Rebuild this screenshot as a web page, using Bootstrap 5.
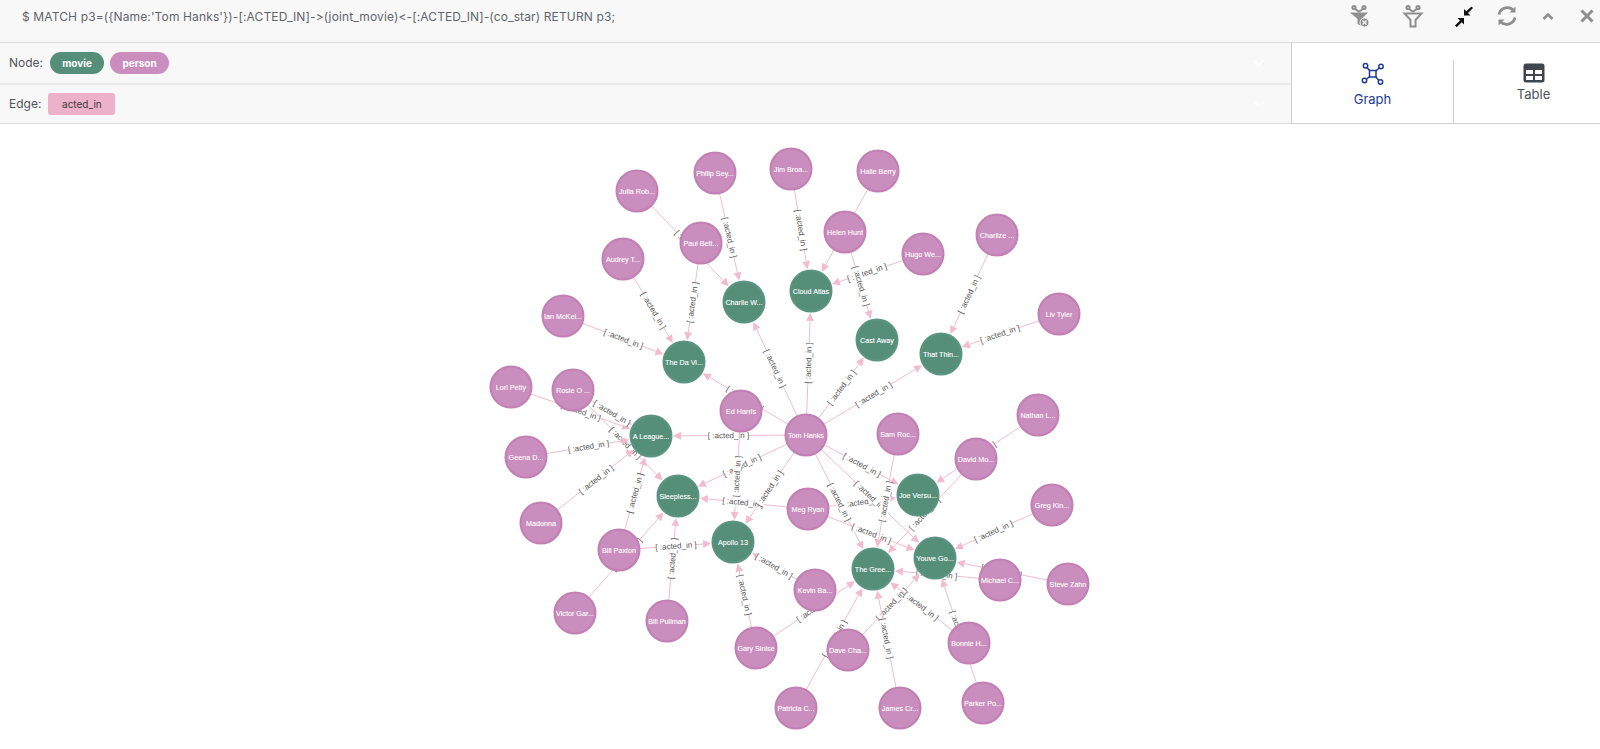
<!DOCTYPE html>
<html lang="en">

<head>
    <meta charset="UTF-8">
    <title>Graph Result</title>
    <link href="https://cdn.jsdelivr.net/npm/bootstrap@5.3.3/dist/css/bootstrap.min.css" rel="stylesheet">
    <style>
        html, body {
            height: 100%;
            overflow: hidden;
        }

        body {
            font-family: Inter, "Open Sans", sans-serif;
            background: #fff;
        }

        .query-bar {
            height: 43px;
            background: #f8f8f8;
            border-bottom: 1px solid #d9d9d9;
            padding-left: 22px;
            color: #5f666d;
            font-size: 12px;
        }

        .query-bar .query-text {
            margin-top: 8px;
            letter-spacing: .13px;
        }

        .tool-group {
            height: 32px;
        }

        .tool-btn {
            width: 26px;
            height: 26px;
            margin-top: 3px;
        }

        .tool-btn:nth-child(2) { margin-left: 28px; }
        .tool-btn:nth-child(3) { margin-left: 24px; }
        .tool-btn:nth-child(4) { margin-left: 18px; }
        .tool-btn:nth-child(5) { margin-left: 15px; }
        .tool-btn:nth-child(6) { margin-left: 13px; }

        .legend-panel {
            height: 81px;
        }

        .legend-rows {
            flex: 1 1 auto;
            background: #f8f8f8;
            border-bottom: 1px solid #d9d9d9;
        }

        .legend-row {
            height: 40px;
            padding-left: 9px;
            font-size: 12px;
            color: #50565c;
        }

        .legend-row + .legend-row {
            border-top: 2px solid #e8e8e8;
        }

        .legend-row .row-label {
            margin-right: 7px;
        }

        .legend-row .fold {
            margin-left: auto;
            margin-right: 27px;
        }

        .pill-movie, .pill-person, .tag-edge {
            height: 22px;
            display: inline-flex;
            align-items: center;
            justify-content: center;
            font-size: 10px;
        }

        .pill-movie {
            width: 54px;
            margin-right: 6px;
            border-radius: 11px;
            background: #558f7a;
            color: #fff;
            font-weight: 700;
        }

        .pill-person {
            width: 59px;
            border-radius: 11px;
            background: #c98dbe;
            color: #fff;
            font-weight: 700;
        }

        .tag-edge {
            width: 67px;
            border-radius: 3px;
            background: #edb2c9;
            color: #3a3a3a;
        }

        .view-switch {
            width: 309px;
            overflow: hidden;
            border-left: 1px solid #d0d0d0;
            border-bottom: 1px solid #d0d0d0;
            background: #fff;
            font-size: 13px;
        }

        .view-tab {
            flex: 0 0 161px;
            padding-top: 19px;
            color: #4a5057;
        }

        .view-tab.active {
            color: #1f3a93;
        }

        .view-tab + .view-tab {
            position: relative;
            padding-top: 20px;
        }

        .view-tab + .view-tab::before {
            content: "";
            position: absolute;
            left: 0;
            top: 17px;
            bottom: 0;
            border-left: 1px solid #d0d0d0;
        }

        .view-tab .tab-icon {
            display: block;
            margin: 0 auto 4px;
        }

        .view-tab + .view-tab .tab-icon {
            margin-bottom: 2px;
        }

        #graph-canvas {
            display: block;
        }

        #graph-canvas text {
            font-family: "Liberation Sans", Arial, sans-serif;
        }
    </style>
</head>

<body>
    <div class="query-bar d-flex justify-content-between">
        <div class="query-text">$ MATCH p3=({Name:'Tom Hanks'})-[:ACTED_IN]-&gt;(joint_movie)&lt;-[:ACTED_IN]-(co_star) RETURN p3;</div>
        <div class="tool-group d-flex">
            <!-- clear filter -->
            <svg class="tool-btn" viewBox="0 0 26 26" fill="none" stroke="#8f8f8f" stroke-width="2">
                <circle cx="8" cy="4.5" r="1.6"/><circle cx="18" cy="4.5" r="1.6"/>
                <path d="M9 6l4 2.5L17 6"/>
                <path d="M4 9.5h18l-6.5 6.5v7l-4-2v-5z" fill="#8f8f8f" stroke="none"/>
                <circle cx="18.500" cy="19.500" r="4.500" fill="#8f8f8f" stroke="#f8f8f8" stroke-width="1"/>
                <path d="M16.500 17.500l4 4m0-4l-4 4" stroke="#f8f8f8" stroke-width="1.300"/>
            </svg>
            <!-- filter -->
            <svg class="tool-btn" viewBox="0 0 26 26" fill="none" stroke="#8f8f8f" stroke-width="2">
                <circle cx="8" cy="4.500" r="1.600"/><circle cx="18" cy="4.500" r="1.600"/>
                <path d="M9 6l4 2.500L17 6"/>
                <path d="M4.500 10.500h17L15.500 17v6.500h-5V17z"/>
            </svg>
            <!-- compress -->
            <svg class="tool-btn" viewBox="0 0 26 26" fill="#111">
                <path d="M5 22.500l5-5-2.500-2.500H14v6.500l-2.300-2.300-5 5z"/>
                <path d="M21.500 3.500l1.500 1.500-5 5 2.500 2.500H14V6l2.300 2.300z"/>
            </svg>
            <!-- refresh -->
            <svg class="tool-btn" viewBox="0 0 26 26" fill="none" stroke="#8f8f8f" stroke-width="2.800">
                <path d="M5 11.500a8.500 8.500 0 0 1 15-3.500"/>
                <path d="M21 14.500a8.500 8.500 0 0 1-15 3.500"/>
                <path d="M21.500 3.500v6h-6z" fill="#8f8f8f" stroke="none"/>
                <path d="M4.500 22.500v-6h6z" fill="#8f8f8f" stroke="none"/>
            </svg>
            <!-- collapse -->
            <svg class="tool-btn" viewBox="0 0 26 26" fill="none" stroke="#8f8f8f" stroke-width="2.600">
                <path d="M8.500 16l4.500-4.500 4.500 4.500"/>
            </svg>
            <!-- close -->
            <svg class="tool-btn" viewBox="0 0 26 26" fill="none" stroke="#8f8f8f" stroke-width="3">
                <path d="M7.500 7.500l11 11m0-11l-11 11"/>
            </svg>
        </div>
    </div>

    <div class="legend-panel d-flex">
        <div class="legend-rows">
            <div class="legend-row d-flex align-items-center">
                <span class="row-label">Node:</span>
                <span class="pill-movie">movie</span>
                <span class="pill-person">person</span>
                <svg class="fold" width="10" height="7" viewBox="0 0 10 7" fill="none" stroke="#fff" stroke-width="2"><path d="M1 1l4 4 4-4"/></svg>
            </div>
            <div class="legend-row d-flex align-items-center">
                <span class="row-label">Edge:</span>
                <span class="tag-edge">acted_in</span>
                <svg class="fold" width="10" height="7" viewBox="0 0 10 7" fill="none" stroke="#fff" stroke-width="2"><path d="M1 1l4 4 4-4"/></svg>
            </div>
        </div>
        <div class="view-switch d-flex">
            <div class="view-tab active text-center">
                <svg class="tab-icon" width="24" height="24" viewBox="0 0 24 24" fill="none" stroke="#1f3a93" stroke-width="1.500">
                    <rect x="8.500" y="8.500" width="6.500" height="6.500"/>
                    <circle cx="4.500" cy="3.800" r="2.200"/><circle cx="20" cy="4.500" r="2.200"/>
                    <circle cx="3.500" cy="18.500" r="2.200"/><circle cx="19.500" cy="20" r="2.200"/>
                    <path d="M6 5.500l2.800 3.300M18.200 6l-3.400 3M5.500 17l3.300-2.300M17.800 18.200l-3-3.300"/>
                </svg>
                Graph
            </div>
            <div class="view-tab text-center">
                <svg class="tab-icon" width="22" height="20" viewBox="0 0 22 20">
                    <rect x="0.500" y="0.500" width="21" height="19" rx="2.500" fill="#3f464d"/>
                    <path d="M3 7h7v4H3zM12 7h7v4h-7zM3 13h7v4H3zM12 13h7v4h-7z" fill="#fff"/>
                </svg>
                Table
            </div>
        </div>
    </div>

    <svg id="graph-canvas" width="1600" height="625" viewBox="0 124 1600 625"></svg>

    <script>
        const nodes = {
            julia: ['Julia Rob...', 637, 191], philip: ['Philip Sey...', 715, 173], jim: ['Jim Broa...', 791, 169],
            halle: ['Halle Berry', 878, 171], paul: ['Paul Bett...', 701, 243], helen: ['Helen Hunt', 845, 232],
            audrey: ['Audrey T...', 623, 259], hugo: ['Hugo We...', 923, 254], charlize: ['Charlize ...', 997, 235],
            ian: ['Ian McKel...', 563, 316], liv: ['Liv Tyler', 1059, 314], lori: ['Lori Petty', 511, 387],
            rosie: ['Rosie O ...', 573, 390], ed: ['Ed Harris', 741, 411], nathan: ['Nathan L...', 1038, 415],
            tom: ['Tom Hanks', 806, 435], sam: ['Sam Roc...', 898, 434], david: ['David Mo...', 976, 459],
            geena: ['Geena D...', 526, 457], madonna: ['Madonna', 541, 523], meg: ['Meg Ryan', 808, 509],
            greg: ['Greg Kin...', 1052, 505], paxton: ['Bill Paxton', 619, 550], michael: ['Michael C...', 1000, 580],
            steve: ['Steve Zahn', 1068, 584], kevin: ['Kevin Ba...', 815, 590], victor: ['Victor Gar...', 575, 613],
            pullman: ['Bill Pullman', 667, 621], gary: ['Gary Sinise', 756, 648], bonnie: ['Bonnie H...', 969, 643],
            dave: ['Dave Cha...', 848, 650], patricia: ['Patricia C...', 796, 708], james: ['James Cr...', 900, 708],
            parker: ['Parker Po...', 983, 703]
        };

        const movies = {
            charlie: ['Charlie W...', 744, 302], cloud: ['Cloud Atlas', 811, 291], cast: ['Cast Away', 877, 340],
            thing: ['That Thin...', 941, 354], davinci: ['The Da Vi...', 684, 362], league: ['A League...', 651, 436],
            sleepless: ['Sleepless...', 678, 496], apollo: ['Apollo 13', 733, 542], joe: ['Joe Versu...', 918, 495],
            youve: ['Youve Go...', 935, 558], green: ['The Gree...', 873, 569]
        };

        // drawn in this order, later labels cover earlier ones
        const edges = [
            'julia charlie', 'philip charlie', 'tom charlie', 'audrey davinci', 'paul davinci', 'ian davinci', 'tom davinci',
            'jim cloud', 'halle cloud', 'hugo cloud', 'helen cast', 'tom cloud', 'tom cast', 'tom thing',
            'charlize thing', 'liv thing', 'lori league', 'rosie sleepless', 'rosie league', 'geena league', 'madonna league',
            'paxton league', 'tom league', 'victor sleepless', 'pullman sleepless', 'paxton apollo', 'tom sleepless',
            'ed apollo', 'meg sleepless', 'tom apollo', 'kevin apollo', 'gary apollo', 'meg joe', 'tom joe', 'tom youve',
            'tom green', 'meg youve', 'sam green', 'nathan joe', 'david green', 'greg youve', 'steve youve',
            'michael green', 'gary green', 'patricia green', 'dave youve', 'james green', 'bonnie green', 'parker youve'
        ];

        const svgNs = 'http://www.w3.org/2000/svg';
        const canvas = document.getElementById('graph-canvas');
        const nodeRadius = 20;
        const edgeColor = '#f1bccf';

        function add(tag, attrs, text) {
            const el = document.createElementNS(svgNs, tag);
            Object.keys(attrs).forEach(k => el.setAttribute(k, attrs[k]));
            if (text) el.textContent = text;
            canvas.appendChild(el);
            return el;
        }

        function getNode(id) {
            return nodes[id] || movies[id];
        }

        edges.forEach(edge => {
            const [from, to] = edge.split(' ').map(getNode);
            const dx = to[1] - from[1];
            const dy = to[2] - from[2];
            const len = Math.hypot(dx, dy);
            const ux = dx / len;
            const uy = dy / len;
            const tipX = to[1] - ux * (nodeRadius + 2);
            const tipY = to[2] - uy * (nodeRadius + 2);
            const baseX = tipX - ux * 8;
            const baseY = tipY - uy * 8;

            add('line', { x1: from[1], y1: from[2], x2: baseX, y2: baseY, stroke: edgeColor, 'stroke-width': 1 });
            add('polygon', {
                points: `${tipX},${tipY} ${baseX - uy * 4},${baseY + ux * 4} ${baseX + uy * 4},${baseY - ux * 4}`,
                fill: edgeColor
            });

            // label stays readable, never upside down
            let angle = Math.atan2(dy, dx) * 180 / Math.PI;
            if (angle > 90) angle -= 180;
            if (angle < -90) angle += 180;
            const midX = (from[1] + to[1]) / 2;
            const midY = (from[2] + to[2]) / 2;
            const rot = `rotate(${angle.toFixed(1)} ${midX} ${midY})`;
            add('rect', { x: midX - 20, y: midY - 4.5, width: 40, height: 9, fill: '#fff', transform: rot });
            add('text', {
                x: midX, y: midY + 2.7, 'font-size': 8, 'text-anchor': 'middle', fill: '#555', transform: rot
            }, '[ :acted_in ]');
        });

        function drawNode(node, fill, stroke) {
            add('circle', { cx: node[1], cy: node[2], r: 20.5, fill: fill, stroke: stroke, 'stroke-width': 2 });
            add('text', {
                x: node[1], y: node[2] + 2.5, 'font-size': 7.2, 'text-anchor': 'middle', fill: '#fff',
                stroke: '#fff', 'stroke-width': 0.1
            }, node[0]);
        }

        Object.values(nodes).forEach(n => drawNode(n, '#c98dbe', '#c27fb3'));
        Object.values(movies).forEach(n => drawNode(n, '#558f7a', '#5b9480'));
    </script>
    <script src="https://cdn.jsdelivr.net/npm/bootstrap@5.3.3/dist/js/bootstrap.bundle.min.js"></script>
</body>

</html>
